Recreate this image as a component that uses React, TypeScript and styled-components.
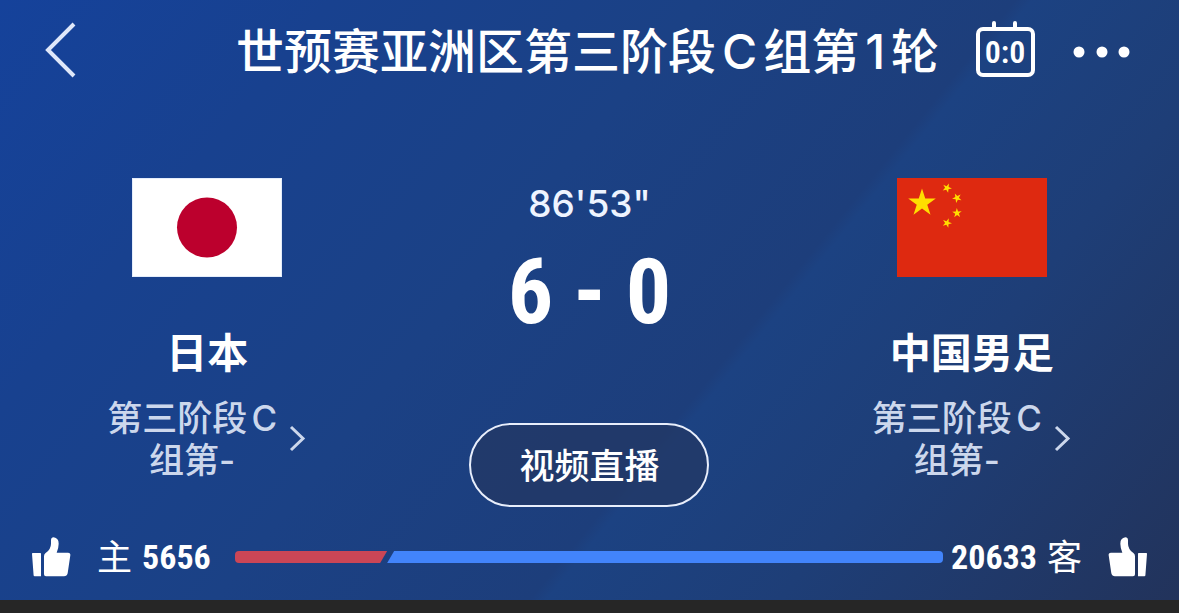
import React from 'react';
import styled, { createGlobalStyle } from 'styled-components';

const uiFont = `Inter, "Noto Sans CJK SC", sans-serif`;
const numberFont = `"Roboto Condensed", "Liberation Sans Narrow", "Noto Sans CJK SC", sans-serif`;

const GlobalStyle = createGlobalStyle`
  * { box-sizing: border-box; }
  body { margin: 0; background: #262626; font-family: ${uiFont}; color: #fff; }
  button { font: inherit; color: inherit; background: none; border: 0; padding: 0; cursor: pointer; }
  svg { display: block; flex: none; }
`;

const Panel = styled.main`
  background: linear-gradient(129deg, #15429b 0%, #18418f 20%, #1b4185 42%, #1d3e7b 61%, #1c4282 62%, #1e3e77 76%, #22335b 100%);
  padding-bottom: 21px;
`;

const Header = styled.header`
  display: grid;
  grid-template-columns: 1fr auto 1fr;
  align-items: center;
  height: 104px;
  padding: 0 48px 0 44px;
`;

const Title = styled.h1`
  margin: 0;
  font-size: 48px;
  line-height: 60px;
  font-weight: 500;
  white-space: nowrap;
  text-autospace: normal;
`;

const Actions = styled.div`
  display: flex;
  align-items: center;
  justify-content: flex-end;
  gap: 38px;
`;

const Match = styled.section`
  display: grid;
  grid-template-columns: repeat(3, 1fr);
  padding: 74px 16px 0;
`;

const Team = styled.div`
  display: flex;
  flex-direction: column;
  align-items: center;
`;

const TeamName = styled.h2`
  margin: 52px 0 20px;
  font-size: 41px;
  line-height: 48px;
  font-weight: 700;
`;

const StageLink = styled.a`
  display: flex;
  align-items: center;
  gap: 6px;
  color: #ccd7ec;
  text-decoration: none;
`;

const StageText = styled.span`
  width: 180px;
  font-size: 35px;
  line-height: 42px;
  font-weight: 500;
  text-align: center;
  text-autospace: normal;
`;

const Centre = styled.div`
  display: flex;
  flex-direction: column;
  align-items: center;
`;

const Clock = styled.time`
  margin-top: 4px;
  font-size: 37px;
  line-height: 44px;
  font-weight: 500;
  color: #eef4ff;
`;

const Score = styled.div`
  display: flex;
  gap: 20px;
  margin: 22px 0 85px;
  font-family: ${numberFont};
  font-size: 90px;
  line-height: 90px;
  font-weight: 700;
`;

const LiveButton = styled.button`
  && {
    width: 240px;
    height: 84px;
    padding-bottom: 4px;
    border: 2px solid #e8eefb;
    border-radius: 42px;
    background: rgba(36, 56, 98, 0.7);
    font-size: 35px;
    font-weight: 500;
  }
`;

const Poll = styled.section`
  display: flex;
  align-items: center;
  height: 44px;
  margin-top: 28px;
  padding: 0 32px;
`;

const Votes = styled.div`
  display: flex;
  align-items: center;
  gap: 10px;
`;

const Side = styled.span`
  font-size: 35px;
  line-height: 44px;
  font-weight: 400;
`;

const Count = styled.span`
  font-family: ${numberFont};
  font-size: 34px;
  line-height: 44px;
  font-weight: 700;
`;

const VoteButton = styled.button<{ $away?: boolean }>`
  margin: ${p => (p.$away ? '0 0 0 26px' : '0 26px 0 0')};
  svg { transform: ${p => (p.$away ? 'scaleX(-1)' : 'none')}; }
`;

const Bar = styled.div`
  display: flex;
  flex: 1;
  height: 12px;
  margin: 0 8px 0 24px;
  border-radius: 4px;
  overflow: hidden;
`;

const HomeBar = styled.div`
  background: #cb4656;
  clip-path: polygon(0 0, 100% 0, calc(100% - 7px) 100%, 0 100%);
`;

const AwayBar = styled.div`
  flex: 1;
  background: #4284fb;
  clip-path: polygon(7px 0, 100% 0, 100% 100%, 0 100%);
`;

function starPoints(cx: number, cy: number, r: number, turn: number) {
  return Array.from({ length: 10 }, (_, i) => {
    const a = turn + (i * Math.PI) / 5;
    const d = i % 2 ? r * 0.382 : r;
    return `${(cx + d * Math.cos(a)).toFixed(2)},${(cy + d * Math.sin(a)).toFixed(2)}`;
  }).join(' ');
}

const JapanFlag = () => (
  <svg width="150" height="99" viewBox="0 0 150 99" role="img" aria-label="日本">
    <rect width="150" height="99" fill="#e4edfb" />
    <rect x="1" y="1" width="148" height="97" fill="#fff" />
    <circle cx="75" cy="49.5" r="30" fill="#bc002d" />
  </svg>
);

const smallStars = [[50, 10], [60, 20], [60, 35], [50, 45]];

const ChinaFlag = () => (
  <svg width="150" height="99" viewBox="0 0 150 99" role="img" aria-label="中国">
    <rect width="150" height="99" fill="#de2910" />
    <g fill="#ffde00">
      <polygon points={starPoints(25, 25, 14.5, -Math.PI / 2)} />
      {smallStars.map(([x, y]) => (
        <polygon key={`${x}-${y}`} points={starPoints(x, y, 5, Math.atan2(25 - y, 25 - x))} />
      ))}
    </g>
  </svg>
);

const BackIcon = () => (
  <svg width="32" height="56" viewBox="0 0 32 56" fill="none" stroke="#dfe8fa" strokeWidth="4">
    <path d="M30 2 L4 28 L30 54" />
  </svg>
);

const ScoreboardIcon = () => (
  <svg width="60" height="62" viewBox="0 0 60 62" fill="none" stroke="#fff" strokeWidth="4">
    <rect x="3" y="8" width="55" height="46" rx="5" />
    <path d="M19 8V2M40 8V2" strokeLinecap="round" />
    <text x="30" y="42" textAnchor="middle" fill="#fff" stroke="none" fontFamily={numberFont} fontSize="32" fontWeight="600">0:0</text>
  </svg>
);

const MoreIcon = () => (
  <svg width="58" height="14" viewBox="0 0 58 14" fill="#fff">
    <circle cx="6" cy="7" r="5.5" />
    <circle cx="29" cy="7" r="5.5" />
    <circle cx="51" cy="7" r="5.5" />
  </svg>
);

const ChevronIcon = () => (
  <svg width="24" height="28" viewBox="0 0 24 28" fill="none" stroke="currentColor" strokeWidth="3">
    <path d="M3 2 L15 13.5 L3 25" />
  </svg>
);

const ThumbIcon = () => (
  <svg width="39" height="40" viewBox="0 0 117 120" fill="#fff">
    <path d="M2 48H25Q27 48 27 50V118H8Q5 118 4.800 115L0 50Q0 48 2 48Z" />
    <path d="M36 58Q36 52 40 49Q57 37 57 20V10Q57 1 65 1Q80 3 80 20Q80 32 74 47H108Q116 47 115 55L107 109Q105 118 96 118H42Q36 118 36 112Z" />
  </svg>
);

const Stage = () => (
  <StageLink href="#stage">
    <StageText>第三阶段C组第-</StageText>
    <ChevronIcon />
  </StageLink>
);

const home = 5656;
const away = 20633;

export default function App() {
  return (
    <>
      <GlobalStyle />
      <Panel>
        <Header>
          <div>
            <button aria-label="返回"><BackIcon /></button>
          </div>
          <Title>世预赛亚洲区第三阶段C组第1轮</Title>
          <Actions>
            <button aria-label="比分"><ScoreboardIcon /></button>
            <button aria-label="更多"><MoreIcon /></button>
          </Actions>
        </Header>
        <Match>
          <Team>
            <JapanFlag />
            <TeamName>日本</TeamName>
            <Stage />
          </Team>
          <Centre>
            <Clock>86'53"</Clock>
            <Score><span>6</span><span>-</span><span>0</span></Score>
            <LiveButton>视频直播</LiveButton>
          </Centre>
          <Team>
            <ChinaFlag />
            <TeamName>中国男足</TeamName>
            <Stage />
          </Team>
        </Match>
        <Poll>
          <VoteButton aria-label="支持主队"><ThumbIcon /></VoteButton>
          <Votes><Side>主</Side><Count>{home}</Count></Votes>
          <Bar>
            <HomeBar style={{ width: `${(home / (home + away)) * 100}%` }} />
            <AwayBar />
          </Bar>
          <Votes><Count>{away}</Count><Side>客</Side></Votes>
          <VoteButton $away aria-label="支持客队"><ThumbIcon /></VoteButton>
        </Poll>
      </Panel>
    </>
  );
}
